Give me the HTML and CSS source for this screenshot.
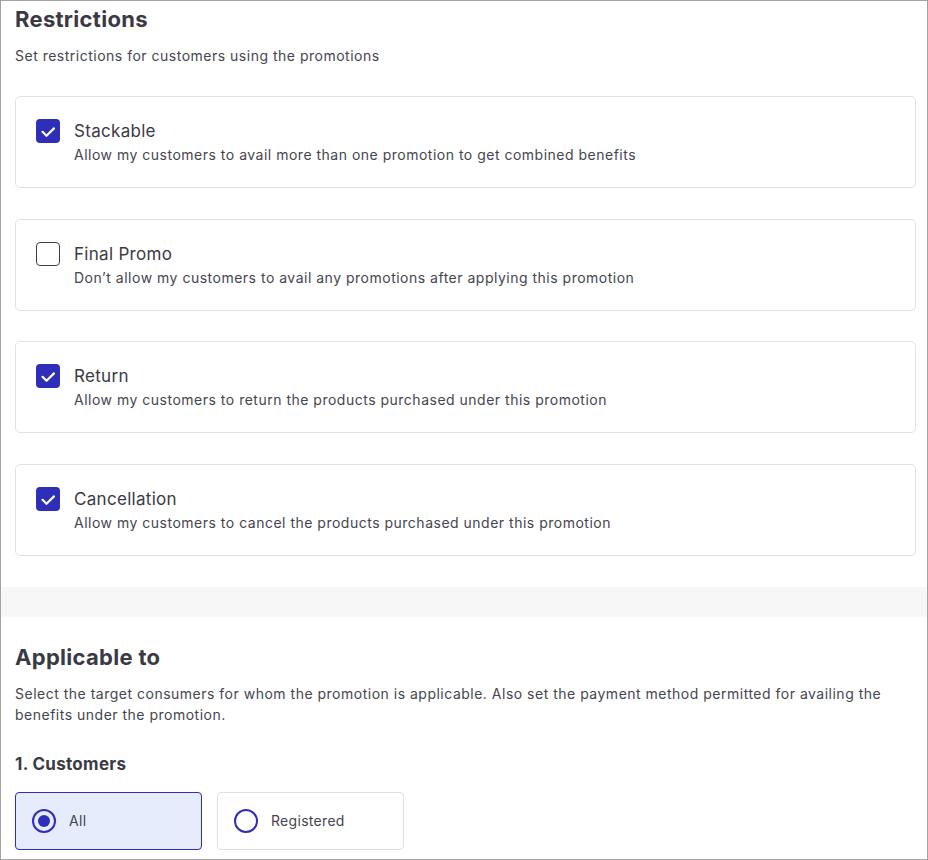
FILE: index.html
```html
<!DOCTYPE html>
<html lang="en">
<head>
<meta charset="utf-8">
<title>Restrictions</title>
<link rel="stylesheet" href="styles.css">
</head>
<body>
<div class="frame">
  <section class="section section-top">
    <h2 class="title">Restrictions</h2>
    <p class="subtitle">Set restrictions for customers using the promotions</p>
    <div class="cards">
      <div class="card">
        <span class="check checked"><svg viewBox="0 0 24 24" width="24" height="24"><path d="M6.5 12.8l4 4L18 9.4" fill="none" stroke="#fff" stroke-width="2.2" stroke-linecap="round" stroke-linejoin="round"/></svg></span>
        <div class="card-text">
          <div class="card-title">Stackable</div>
          <div class="card-desc">Allow my customers to avail more than one promotion to get combined benefits</div>
        </div>
      </div>
      <div class="card">
        <span class="check"></span>
        <div class="card-text">
          <div class="card-title">Final Promo</div>
          <div class="card-desc">Don’t allow my customers to avail any promotions after applying this promotion</div>
        </div>
      </div>
      <div class="card">
        <span class="check checked"><svg viewBox="0 0 24 24" width="24" height="24"><path d="M6.5 12.8l4 4L18 9.4" fill="none" stroke="#fff" stroke-width="2.2" stroke-linecap="round" stroke-linejoin="round"/></svg></span>
        <div class="card-text">
          <div class="card-title">Return</div>
          <div class="card-desc">Allow my customers to return the products purchased under this promotion</div>
        </div>
      </div>
      <div class="card">
        <span class="check checked"><svg viewBox="0 0 24 24" width="24" height="24"><path d="M6.5 12.8l4 4L18 9.4" fill="none" stroke="#fff" stroke-width="2.2" stroke-linecap="round" stroke-linejoin="round"/></svg></span>
        <div class="card-text">
          <div class="card-title">Cancellation</div>
          <div class="card-desc">Allow my customers to cancel the products purchased under this promotion</div>
        </div>
      </div>
    </div>
  </section>
  <div class="band"></div>
  <section class="section section-bottom">
    <h2 class="title">Applicable to</h2>
    <p class="subtitle long">Select the target consumers for whom the promotion is applicable. Also set the payment method permitted for availing the benefits under the promotion.</p>
    <h3 class="subhead">1. Customers</h3>
    <div class="options">
      <div class="option selected"><span class="radio on"></span><span class="option-label">All</span></div>
      <div class="option"><span class="radio"></span><span class="option-label">Registered</span></div>
    </div>
  </section>
</div>
</body>
</html>
```

FILE: styles.css
```css
* { box-sizing: border-box; }
html, body { margin: 0; padding: 0; background: #fff; }
body {
  font-family: Inter, "Noto Sans", sans-serif;
  color: #3d3d4a;
}
.frame {
  width: 928px;
  height: 860px;
  border: 1px solid #a3a3a3;
  overflow: hidden;
  background: #fff;
}
.section { padding: 0 11px 0 14px; }
.section-top { padding-top: 4px; padding-bottom: 31px; }
.section-bottom { padding-top: 26px; }
.title {
  margin: 0;
  font-size: 22px;
  line-height: 28px;
  font-weight: 700;
  letter-spacing: 0.3px;
  color: #3a3a44;
}
.subtitle {
  margin: 13px 0 0;
  font-size: 14px;
  line-height: 20px;
  letter-spacing: 0.5px;
  color: #45454f;
}
.subtitle.long { line-height: 21px; margin-top: 12px; }
.cards {
  margin-top: 30px;
  display: flex;
  flex-direction: column;
  gap: 30.67px;
}
.card {
  display: flex;
  align-items: flex-start;
  gap: 14px;
  height: 92px;
  padding: 22px 20px;
  border: 1px solid #e2e2e2;
  border-radius: 5px;
}
.check {
  flex: none;
  width: 24px;
  height: 24px;
  border: 1.5px solid #3d3d4a;
  border-radius: 4px;
  display: flex;
  align-items: center;
  justify-content: center;
}
.check.checked {
  background: #2e2eb8;
  border: none;
}
.check svg { display: block; }
.card-title {
  font-size: 17px;
  line-height: 24px;
  letter-spacing: 0.3px;
  color: #3a3a44;
}
.card-desc {
  margin-top: 2px;
  font-size: 14px;
  line-height: 20px;
  letter-spacing: 0.5px;
  color: #45454f;
}
.band {
  height: 30px;
  background: #f7f7f7;
}
.subhead {
  margin: 27px 0 0;
  font-size: 17px;
  line-height: 24px;
  font-weight: 700;
  letter-spacing: 0.3px;
  color: #3a3a44;
}
.options {
  margin-top: 16px;
  display: flex;
  gap: 15px;
}
.option {
  width: 187px;
  height: 58px;
  border: 1px solid #e0e0e0;
  border-radius: 4px;
  display: flex;
  align-items: center;
  gap: 13px;
  padding-left: 16px;
}
.option.selected {
  border-color: #2e2eb8;
  background: #e7ecfd;
}
.radio {
  flex: none;
  width: 24px;
  height: 24px;
  border: 2px solid #2e2eb8;
  border-radius: 50%;
  display: flex;
  align-items: center;
  justify-content: center;
}
.radio.on::after {
  content: "";
  width: 12px;
  height: 12px;
  border-radius: 50%;
  background: #2e2eb8;
}
.option-label {
  font-size: 14px;
  line-height: 20px;
  letter-spacing: 0.3px;
  color: #45454f;
}
```
